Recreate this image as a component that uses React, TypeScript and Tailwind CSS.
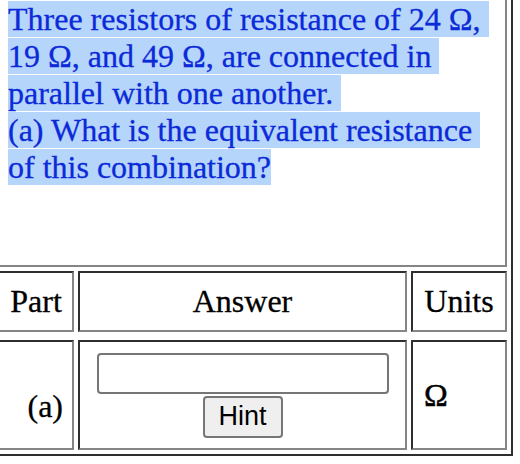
import React from 'react';

const lines = [
  'Three resistors of resistance of 24 \u03A9,',
  '19 \u03A9, and 49 \u03A9, are connected in',
  'parallel with one another.',
  '(a) What is the equivalent resistance',
  'of this combination?',
];

const cell = 'border-2 border-t-[#2e2e2e] border-l-[#2e2e2e] border-r-[#858585] border-b-[#858585]';

export default function App() {
  return (
    <div className="w-[520px] h-[464px] overflow-hidden bg-white font-['Liberation_Serif',serif] text-black">
      <div className="-ml-[8px] -mt-[9px] w-[521px] h-[465px] border-2 border-t-[#858585] border-l-[#858585] border-r-[#2e2e2e] border-b-[#2e2e2e] p-[4px] flex flex-col">
        {/* question */}
        <div className={`${cell} h-[270px] pt-[2px] pl-[8px] text-[32px] leading-[37px] text-[#0b2ad8] [-webkit-text-stroke:0.3px]`}>
          {lines.map((l, i) => (
            <React.Fragment key={i}>
              <span className="bg-[#b6d5fb] whitespace-nowrap">
                {l}
                {i < lines.length - 1 ? '\u00a0' : ''}
              </span>
              <br />
            </React.Fragment>
          ))}
        </div>

        {/* header row */}
        <div className="mt-[4px] flex gap-[4px] h-[61px] text-[32px] leading-[37px] [-webkit-text-stroke:0.3px]">
          <div className={`${cell} w-[76px] flex items-center justify-center`}>Part</div>
          <div className={`${cell} w-[329px] flex items-center justify-center`}>Answer</div>
          <div className={`${cell} w-[96px] flex items-center justify-center`}>Units</div>
        </div>

        {/* part (a) */}
        <div className="mt-[8px] flex gap-[4px] h-[110px] text-[32px] leading-[37px]">
          <div className={`${cell} w-[76px] flex items-end justify-end pr-[9px] pb-[23px] [-webkit-text-stroke:0.3px]`}>(a)</div>
          <div className={`${cell} w-[329px] flex flex-col items-center justify-center gap-[2px]`}>
            <input
              type="text"
              className="w-[292px] h-[41px] border-2 border-[#767676] rounded-[4px] bg-white outline-none"
            />
            <button
              type="button"
              className="w-[80px] h-[42px] border-2 border-[#767676] rounded-[4px] bg-[#efefef] font-['Liberation_Sans',Arial,sans-serif] text-[27px] leading-none text-black"
            >
              Hint
            </button>
          </div>
          <div className={`${cell} w-[96px] flex items-center pl-[11px] [-webkit-text-stroke:0.5px]`}>{'\u03A9'}</div>
        </div>
      </div>
    </div>
  );
}
